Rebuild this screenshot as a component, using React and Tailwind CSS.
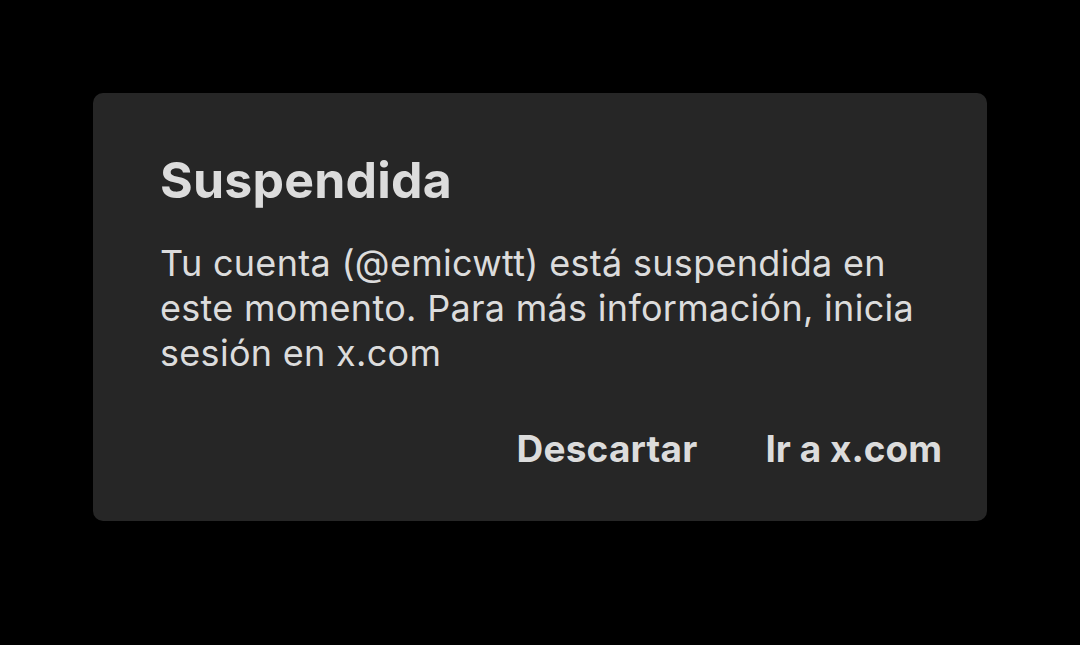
import React from "react";

const SuspendedDialog = () => {
  return (
    <div className="w-[894px] rounded-[10px] bg-[#262626] pl-[67px] pr-[45px] pt-[57px] pb-[50px]">
      <h1 className="text-[50px] font-bold leading-[60px] tracking-[0.2px] text-[#dcdcdc]">Suspendida</h1>
      <p className="mt-[31px] pr-[10px] text-[36px] leading-[45px] tracking-[0.3px] text-[#dcdcdc]">
        Tu cuenta (@emicwtt) está suspendida en este momento. Para más información, inicia sesión en x.com
      </p>
      <div className="mt-[51px] flex justify-end gap-[68px]">
        <button className="text-[37px] font-bold leading-[44px] tracking-[0.2px] text-[#dcdcdc]">Descartar</button>
        <button className="text-[37px] font-bold leading-[44px] text-[#dcdcdc]">Ir a x.com</button>
      </div>
    </div>
  );
};

export default function App() {
  return (
    <div
      className="flex h-[645px] w-[1080px] items-start bg-black pl-[93px] pt-[93px]"
      style={{ fontFamily: "Inter, 'Noto Sans', sans-serif" }}
    >
      <SuspendedDialog />
    </div>
  );
}
